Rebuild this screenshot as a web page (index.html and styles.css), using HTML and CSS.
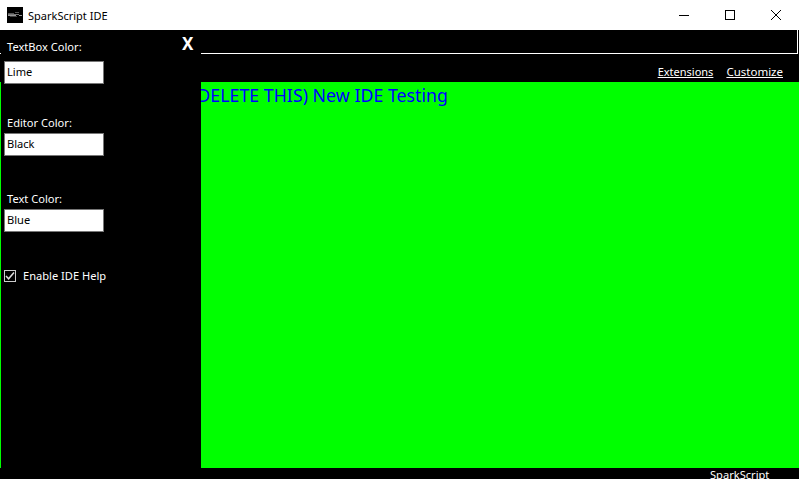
FILE: index.html
```html
<!DOCTYPE html>
<html lang="en">
<head>
<meta charset="utf-8">
<title>SparkScript IDE</title>
<link rel="stylesheet" href="styles.css">
</head>
<body>
<div class="window">
  <header class="titlebar">
    <svg class="app-icon" width="16" height="16" viewBox="0 0 16 16"><rect width="16" height="16" fill="#000"/><path d="M1 6h6v1H1zM8 5h4v1H8z" fill="#555"/><path d="M1 7h11v1H1z" fill="#777"/><path d="M1 8h8v1H1zM12 8h3v1h-3z" fill="#999"/><path d="M3 9h7v1H3z" fill="#444"/></svg>
    <span class="app-title">SparkScript IDE</span>
    <div class="window-controls">
      <button class="win-btn"><svg width="12" height="12" viewBox="0 0 12 12"><path d="M1 6.5h10" stroke="#000" fill="none"/></svg></button>
      <button class="win-btn"><svg width="12" height="12" viewBox="0 0 12 12"><rect x="1.5" y="1.5" width="9" height="9" stroke="#000" fill="none"/></svg></button>
      <button class="win-btn"><svg width="12" height="12" viewBox="0 0 12 12"><path d="M1 1l10 10M11 1L1 11" stroke="#000" fill="none"/></svg></button>
    </div>
  </header>
  <main class="workspace">
    <div class="top-area">
      <div class="search-line"></div>
      <nav class="links">
        <a class="link-ext" href="#">Extensions</a>
        <a href="#">Customize</a>
      </nav>
    </div>
    <div class="editor">(DELETE THIS) New IDE Testing</div>
    <footer class="statusbar"><span>SparkScript</span></footer>
    <aside class="sidebar">
      <button class="close-x">X</button>
      <div class="field field-first">
        <label class="field-label">TextBox Color:</label>
        <div class="field-input">Lime</div>
      </div>
      <div class="field field-second">
        <label class="field-label">Editor Color:</label>
        <div class="field-input">Black</div>
      </div>
      <div class="field field-third">
        <label class="field-label">Text Color:</label>
        <div class="field-input">Blue</div>
      </div>
      <div class="check-row">
        <span class="check-box"><svg width="10" height="10" viewBox="0 0 10 10"><path d="M1 5l2.6 2.8L9 1.5" stroke="#ddd" stroke-width="1.5" fill="none"/></svg></span>
        <span class="check-label">Enable IDE Help</span>
      </div>
    </aside>
  </main>
</div>
</body>
</html>
```
FILE: styles.css
```css
* { box-sizing: border-box; }
html, body { margin: 0; height: 100%; overflow: hidden; }
body { font-family: "Noto Sans", "Open Sans", sans-serif; font-size: 11.1px; background: #000; }
.window { width: 799px; height: 479px; display: flex; flex-direction: column; }
.titlebar { height: 30px; background: #fff; display: flex; align-items: center; padding-left: 7px; color: #000; flex: none; }
.app-icon { flex: none; }
.app-title { margin-left: 5px; font-size: 11px; }
.window-controls { margin-left: auto; display: flex; }
.win-btn { width: 46px; height: 30px; border: 0; background: none; padding: 0; display: flex; align-items: center; justify-content: center; }
.workspace { position: relative; flex: 1; display: flex; flex-direction: column; background: #000; min-height: 0; }
.top-area { height: 52px; flex: none; display: flex; flex-direction: column; }
.search-line { height: 24px; width: 798px; border-bottom: 1px solid #fff; border-right: 1px solid #fff; }
.links { display: flex; justify-content: flex-end; gap: 13px; padding: 10px 16px 0 0; }
.links a { color: #fff; text-decoration: underline; line-height: 16px; font-size: 11.5px; }
.links .link-ext { font-size: 11px; }
.editor { flex: 1; background: #0f0; color: #00f; font-size: 17.8px; line-height: 27px; padding-left: 192px; white-space: nowrap; }
.statusbar { height: 11px; flex: none; background: #000; color: #fff; overflow: hidden; padding-left: 710px; line-height: 14px; }
.sidebar { position: absolute; left: 1px; top: 0; bottom: 11px; width: 200px; background: #000; color: #fff; padding: 0 0 0 3px; }
.close-x { position: absolute; left: 181px; top: 4px; background: none; border: 0; padding: 0; color: #fff; font: bold 17px/20px "Noto Sans", sans-serif; }
.field-label { display: block; padding-left: 3px; height: 16px; line-height: 16px; margin-bottom: 2px; }
.field-first .field-label { margin-bottom: 6px; }
.field-input { width: 100px; height: 23px; background: #fff; border: 1px solid #777; color: #000; padding-left: 2px; line-height: 20px; }
.field-first { padding-top: 9px; }
.field-second { padding-top: 31px; }
.field-third { padding-top: 35px; }
.check-row { display: flex; align-items: center; margin-top: 36px; }
.check-box { width: 12px; height: 12px; background: #000; border: 1px solid #ccc; display: flex; align-items: center; justify-content: center; }
.check-label { margin-left: 7px; }
```
